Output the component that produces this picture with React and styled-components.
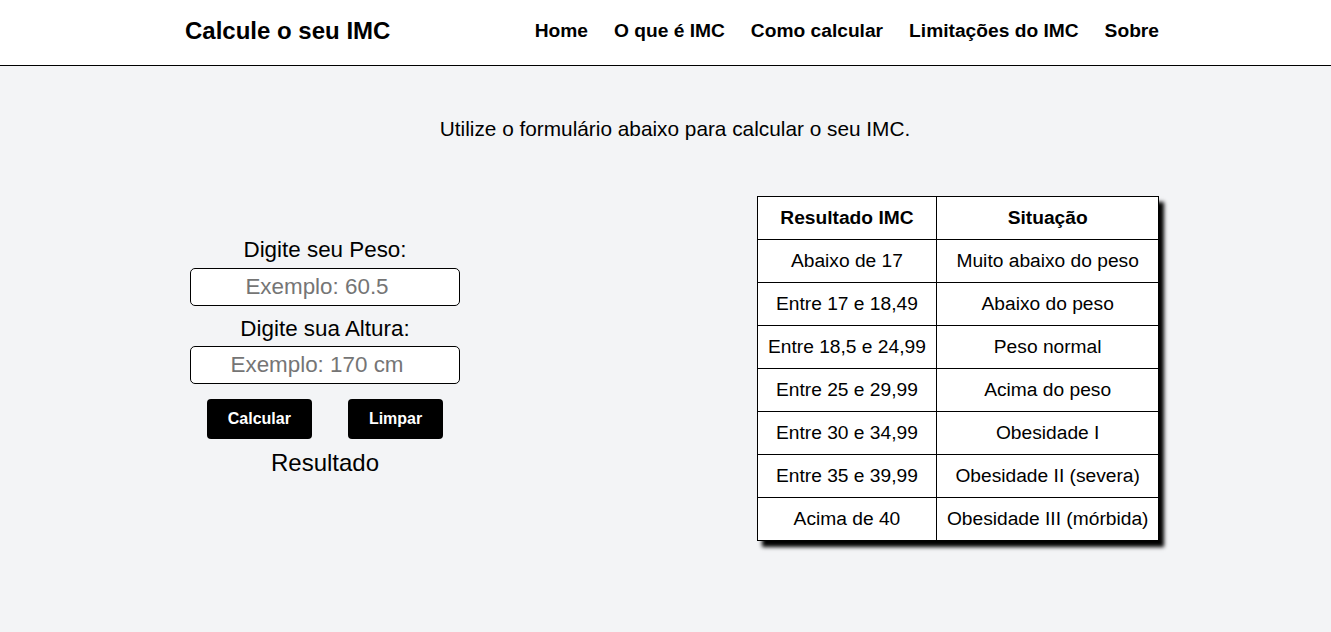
import React, { useState } from "react";
import styled, { createGlobalStyle } from "styled-components";

const GlobalStyle = createGlobalStyle`
  * { box-sizing: border-box; }
  body {
    margin: 0;
    background: #f3f4f6;
    font-family: "Liberation Sans", Arial, sans-serif;
    color: #000;
  }
`;

const tabela = [
  ["Abaixo de 17", "Muito abaixo do peso"],
  ["Entre 17 e 18,49", "Abaixo do peso"],
  ["Entre 18,5 e 24,99", "Peso normal"],
  ["Entre 25 e 29,99", "Acima do peso"],
  ["Entre 30 e 34,99", "Obesidade I"],
  ["Entre 35 e 39,99", "Obesidade II (severa)"],
  ["Acima de 40", "Obesidade III (mórbida)"],
];

const links = ["Home", "O que é IMC", "Como calcular", "Limitações do IMC", "Sobre"];

const App = () => {
  const [peso, setPeso] = useState("");
  const [altura, setAltura] = useState("");

  //   limpar formulário
  const limpar = () => {
    setPeso("");
    setAltura("");
  };

  return (
    <>
      <GlobalStyle />
      <Header>
        <div className="header-inner">
          <h1 className="logo">Calcule o seu IMC</h1>
          <nav>
            {links.map((link) => (
              <a key={link} href="#">
                {link}
              </a>
            ))}
          </nav>
        </div>
      </Header>

      <Main>
        <p className="intro">Utilize o formulário abaixo para calcular o seu IMC.</p>
        <div className="content">
          <Form onSubmit={(e) => e.preventDefault()}>
            <label htmlFor="peso">Digite seu Peso:</label>
            <input
              id="peso"
              placeholder="Exemplo: 60.5"
              value={peso}
              onChange={(e) => setPeso(e.target.value)}
            />
            <label htmlFor="altura" className="second">
              Digite sua Altura:
            </label>
            <input
              id="altura"
              placeholder="Exemplo: 170 cm"
              value={altura}
              onChange={(e) => setAltura(e.target.value)}
            />
            <div className="buttons">
              <Button type="submit">Calcular</Button>
              <Button type="button" onClick={limpar}>
                Limpar
              </Button>
            </div>
            <p className="resultado">Resultado</p>
          </Form>

          <Table>
            <thead>
              <tr>
                <th>Resultado IMC</th>
                <th>Situação</th>
              </tr>
            </thead>
            <tbody>
              {tabela.map(([faixa, situacao]) => (
                <tr key={faixa}>
                  <td>{faixa}</td>
                  <td>{situacao}</td>
                </tr>
              ))}
            </tbody>
          </Table>
        </div>
      </Main>
    </>
  );
};

const Header = styled.header`
  background: #fff;
  height: 66px;
  border-bottom: 1px solid #000;
  padding-left: 13px;

  .header-inner {
    max-width: 974px;
    height: 100%;
    margin: 0 auto;
    display: flex;
    align-items: center;
    justify-content: space-between;
    padding-bottom: 3px;
  }

  .logo {
    margin: 0;
    font-size: 24px;
    font-weight: 700;
  }

  nav {
    display: flex;
    gap: 26px;
    padding-bottom: 1px;
  }

  nav a {
    color: #000;
    text-decoration: none;
    font-weight: 700;
    font-size: 19.2px;
  }
`;

const Main = styled.main`
  padding-bottom: 60px;

  .intro {
    margin: 51px 0 0 19px;
    text-align: center;
    font-size: 20.8px;
  }

  .content {
    margin-top: 55px;
    display: flex;
    align-items: flex-start;
    padding-left: 190px;
    gap: 297px;
  }
`;

const Form = styled.form`
  width: 270px;
  margin-top: 41px;
  display: flex;
  flex-direction: column;
  align-items: center;

  label {
    font-size: 22.4px;
    line-height: 26px;
    margin-bottom: 5px;
  }

  .second {
    margin-top: 10px;
    margin-bottom: 4px;
  }

  input {
    width: 270px;
    height: 38px;
    border: 1px solid #000;
    border-radius: 5px;
    background: #fff;
    text-align: center;
    padding: 0 16px 0 0;
    font-family: inherit;
    font-size: 22.4px;
    outline: none;
  }

  input::placeholder {
    color: #757575;
  }

  .buttons {
    margin-top: 15px;
    display: flex;
    gap: 36px;
  }

  .resultado {
    margin: 10px 0 0;
    font-size: 24px;
  }
`;

const Button = styled.button`
  height: 40px;
  padding: 0 21px;
  background: #000;
  color: #fff;
  border: none;
  border-radius: 4px;
  font-family: inherit;
  font-weight: 700;
  font-size: 16px;
  cursor: pointer;
`;

/* separate borders so the table box has a real outer edge for the shadow */
const Table = styled.table`
  border-collapse: separate;
  border-spacing: 0;
  background: #fff;
  border-top: 1px solid #000;
  border-left: 1px solid #000;
  box-shadow: 5px 6px 4px #000;
  font-size: 19.2px;

  th,
  td {
    border-right: 1px solid #000;
    border-bottom: 1px solid #000;
    padding: 10px;
    height: 43px;
    text-align: center;
    white-space: nowrap;
  }

  th {
    font-weight: 700;
  }
`;

export default App;
